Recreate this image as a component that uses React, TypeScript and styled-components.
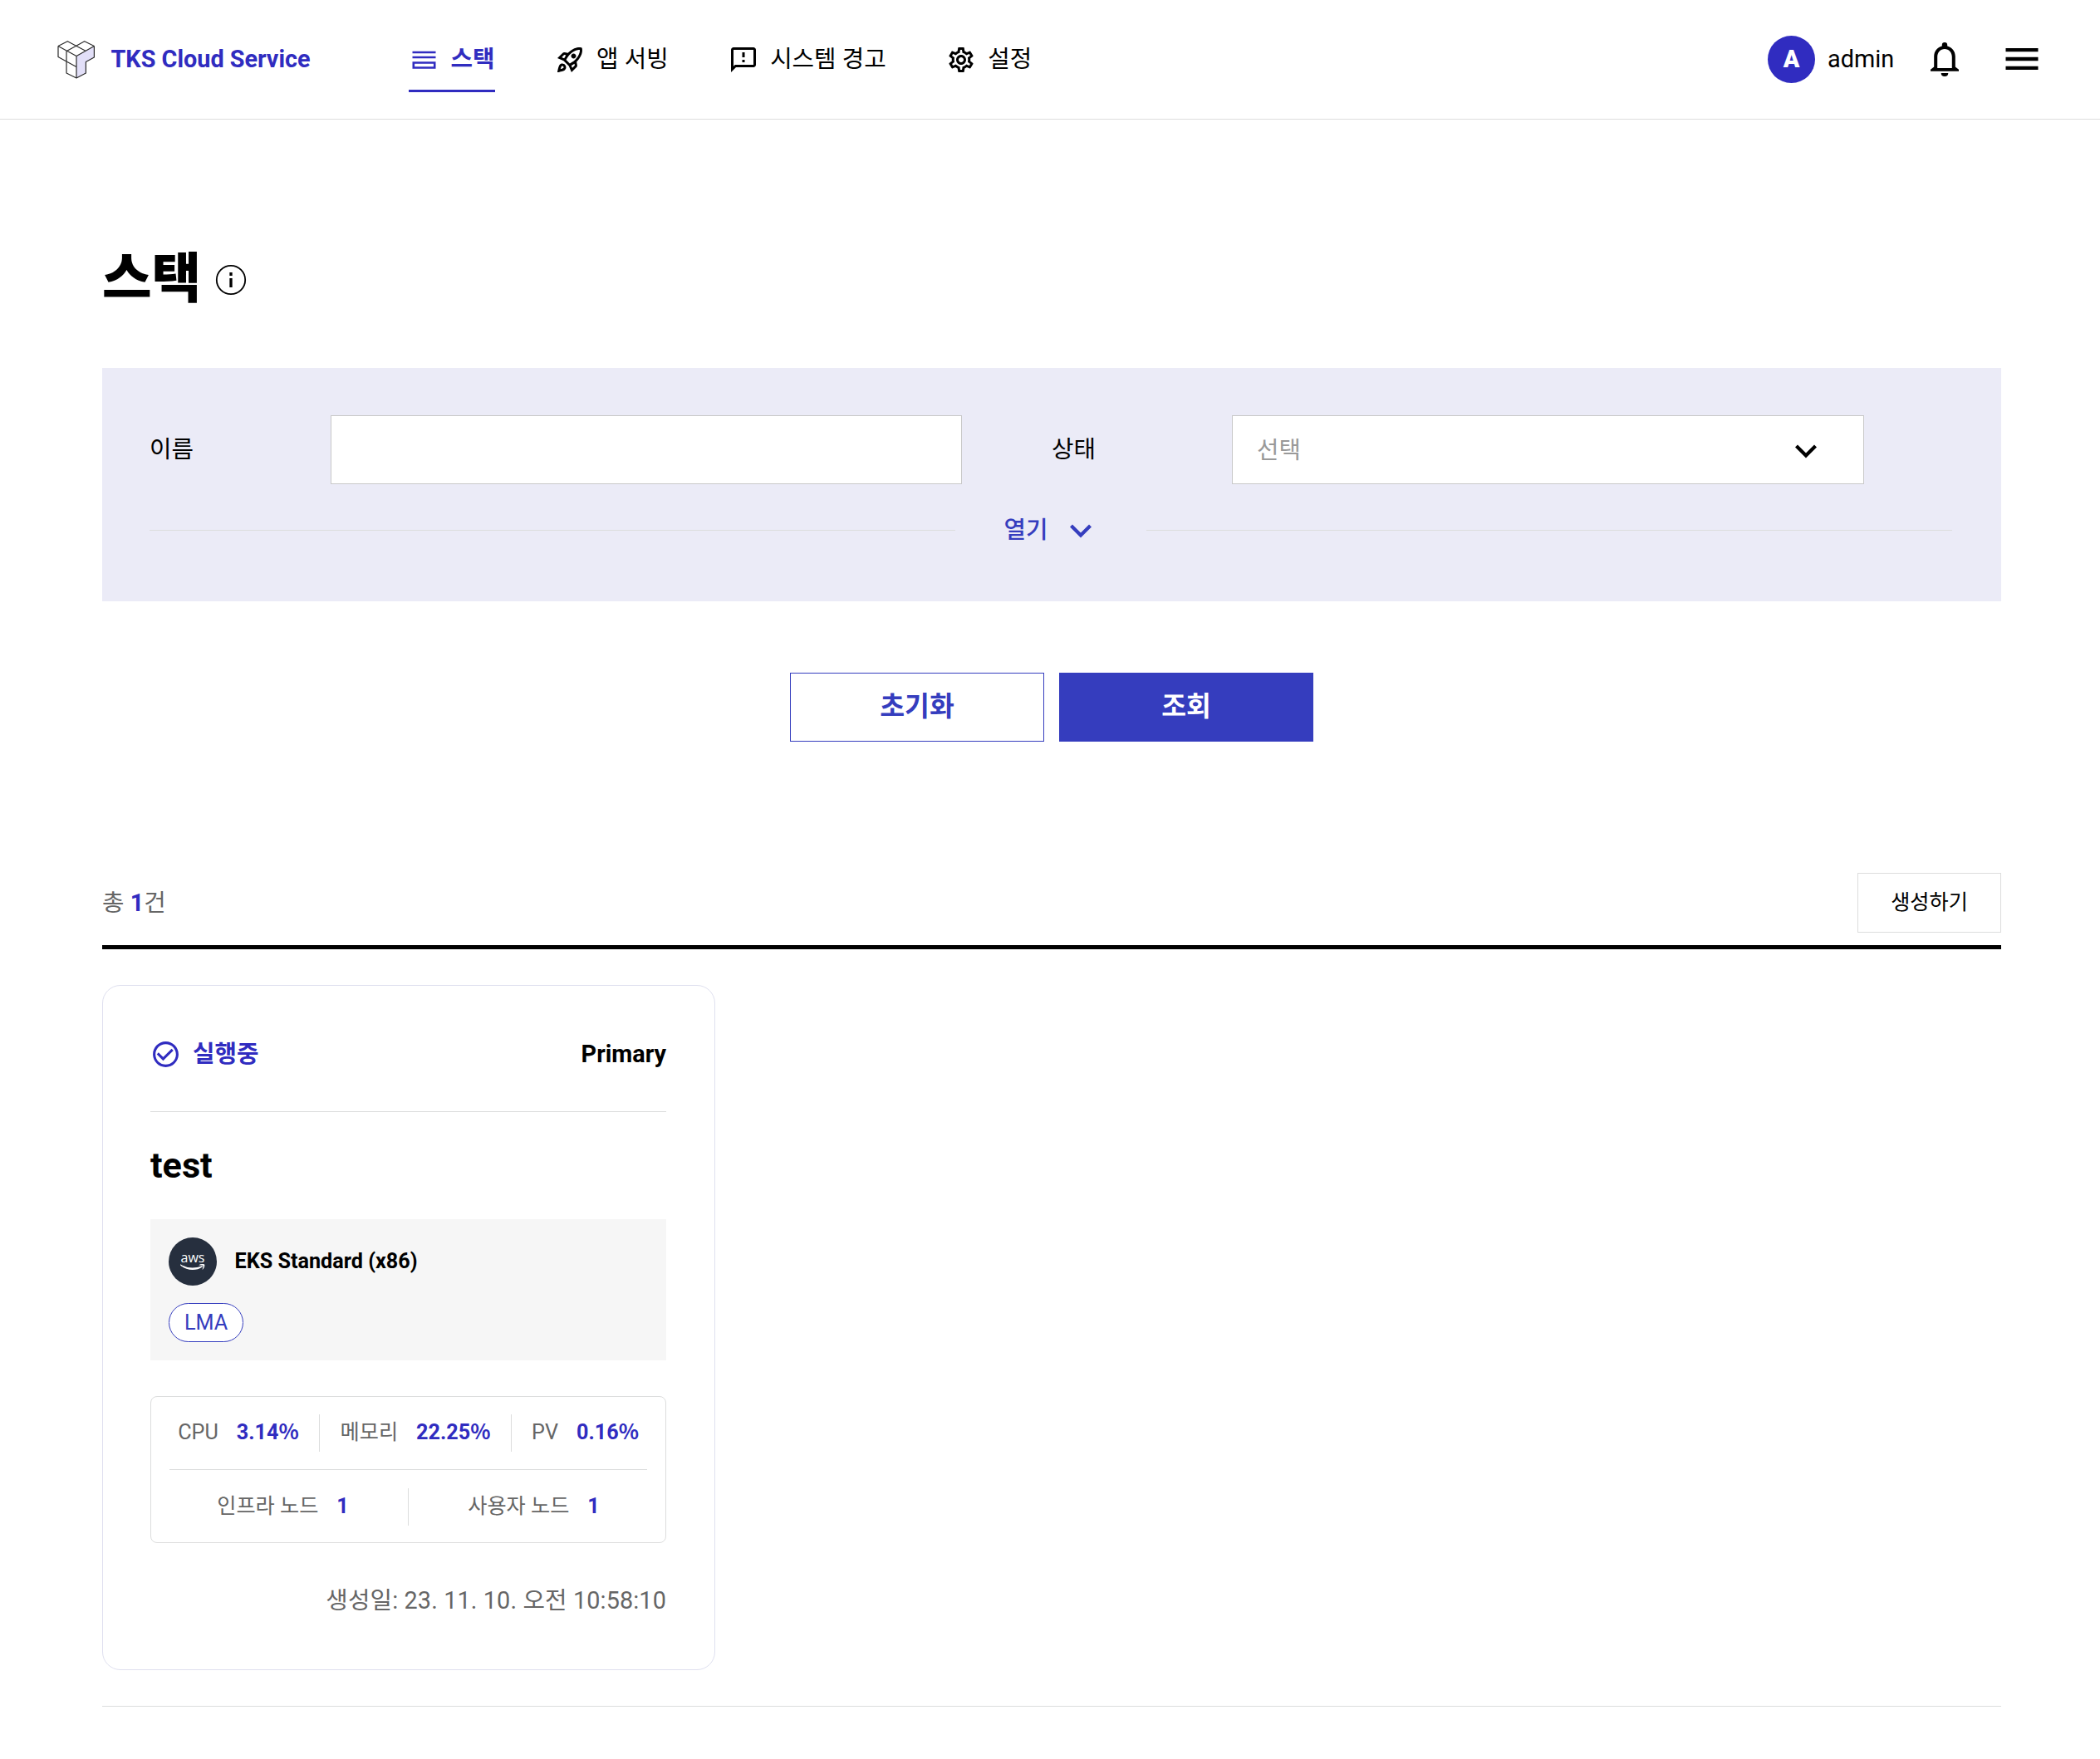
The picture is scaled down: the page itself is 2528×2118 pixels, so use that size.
import React from "react";
import styled, { createGlobalStyle } from "styled-components";
import { MdOutlineRocketLaunch, MdOutlineFeedback, MdOutlineSettings, MdMenu, MdCheckCircleOutline } from "react-icons/md";

const GlobalStyle = createGlobalStyle`
  *, *::before, *::after { box-sizing: border-box; }
  body { margin: 0; background: #fff; color: #000; font-family: Roboto, "Noto Sans CJK KR", sans-serif; font-size: 28.8px; line-height: 1.3; }
  h1, h2, p { margin: 0; }
  button, input { font: inherit; border-radius: 0; padding: 0; cursor: pointer; }
`;

const Header = styled.header`
  display: flex;
  align-items: center;
  height: 144px;
  padding: 0 68px 0 69px;
  border-bottom: 1px solid #dcdddd;
`;
const Brand = styled.div`
  display: flex;
  align-items: center;
  gap: 18.5px;
  width: 423px;
  color: #302cc0;
  font-weight: 700;
`;
const BrandName = styled.span`
  padding-top: 0;
`;
const Nav = styled.nav`
  display: flex;
  gap: 72px;
  flex: 1;
`;
const NavItem = styled.a<{ $active?: boolean }>`
  display: flex;
  align-items: center;
  gap: 14.5px;
  height: 79px;
  padding-top: 4px;
  border-bottom: 3px solid ${(p) => (p.$active ? "#302cc0" : "transparent")};
  color: ${(p) => (p.$active ? "#302cc0" : "#000")};
  font-weight: ${(p) => (p.$active ? 700 : 400)};
  white-space: nowrap;
`;
const UserArea = styled.div`
  display: flex;
  align-items: center;
`;
const Avatar = styled.span`
  display: grid;
  place-items: center;
  width: 57px;
  height: 57px;
  margin-right: 15px;
  border-radius: 50%;
  background: #302cc0;
  color: #fff;
  font-weight: 900;
`;
const UserName = styled.span`
  width: 124px;
`;
const IconButton = styled.button`
  display: flex;
  border: 0;
  background: none;
  color: #000;
  & + & { margin-left: 50px; padding-bottom: 2px; }
`;

const Main = styled.main`
  width: 2286px;
  margin-left: 123px;
`;
const TitleRow = styled.div`
  display: flex;
  align-items: center;
  gap: 17px;
  height: 299px;
  padding-top: 84px;
`;
const Title = styled.h1`
  font-size: 64.8px;
  font-weight: 900;
  line-height: 80px;
`;
const Filter = styled.section`
  height: 281px;
  padding: 57px;
  background: #ebebf7;
`;
const FieldRow = styled.div`
  display: grid;
  grid-template-columns: 218px 760px 108px 217px 761px;
  align-items: center;
  height: 83px;
`;
const Label = styled.label``;
const SecondLabel = styled(Label)`
  grid-column: 4;
`;
const TextInput = styled.input`
  width: 100%;
  height: 83px;
  border: 1px solid #c8c8c8;
  background: #fff;
`;
const Select = styled.div`
  display: flex;
  align-items: center;
  justify-content: space-between;
  height: 83px;
  padding: 2px 55px 0 29px;
  border: 1px solid #c8c8c8;
  background: #fff;
  color: #999;
`;
const FoldRow = styled.div`
  display: flex;
  align-items: center;
  height: 40px;
  margin: 35px 2px 0 0;
`;
const FoldLine = styled.span`
  flex: 1;
  height: 1px;
  background: #dcdddd;
`;
const FoldButton = styled.button`
  display: flex;
  align-items: center;
  justify-content: center;
  gap: 25px;
  width: 230px;
  padding: 2px 7px 0 0;
  border: 0;
  background: none;
  color: #353dbe;
  font-weight: 500;
`;
const Actions = styled.div`
  display: flex;
  justify-content: center;
  gap: 18px;
  margin-top: 86px;
`;
const ActionButton = styled.button<{ $primary?: boolean }>`
  width: 306px;
  height: 83px;
  padding-bottom: 1px;
  border: 1px solid #353dbe;
  background: ${(p) => (p.$primary ? "#353dbe" : "#fff")};
  color: ${(p) => (p.$primary ? "#fff" : "#353dbe")};
  font-size: 32.4px;
  font-weight: 700;
`;
const ListHeader = styled.div`
  display: flex;
  align-items: center;
  justify-content: space-between;
  height: 92px;
  margin-top: 158px;
  padding-bottom: 15px;
  border-bottom: 5px solid #000;
  color: #666;
`;
const Total = styled.span`
  padding-top: 2px;
`;
const Count = styled.strong`
  color: #302cc0;
`;
const CreateButton = styled.button`
  width: 173px;
  height: 72px;
  border: 1px solid #dcdddd;
  background: #fff;
  color: #000;
  font-size: 25.2px;
`;
const CardList = styled.div`
  display: grid;
  grid-template-columns: 738px;
  padding: 43px 0;
  border-bottom: 1px solid #dcdddd;
`;
const Card = styled.article`
  height: 825px;
  padding: 0 58px 0 57px;
  border: 1px solid #dfe0ef;
  border-radius: 22px;
`;
const CardTop = styled.div`
  display: flex;
  align-items: center;
  justify-content: space-between;
  height: 152px;
  padding-top: 15px;
  border-bottom: 1px solid #dcdddd;
  font-weight: 700;
`;
const Status = styled.span`
  display: flex;
  align-items: center;
  gap: 14px;
  color: #302cc0;
`;
const CardName = styled.h2`
  margin: 37px 0 36px;
  font-size: 43.2px;
  line-height: 56px;
  font-weight: 700;
`;
const Template = styled.div`
  height: 170px;
  padding: 22px;
  background: #f6f6f6;
`;
const TemplateName = styled.div`
  display: flex;
  align-items: center;
  gap: 21.5px;
  height: 58px;
  margin-bottom: 21px;
  font-size: 25.2px;
  font-weight: 700;
`;
const AwsBadge = styled.span`
  display: flex;
  flex-direction: column;
  align-items: center;
  width: 58px;
  height: 58px;
  padding-top: 16px;
  border-radius: 50%;
  background: #262f3e;
  color: #fff;
  font: 500 16px/16px "Open Sans", sans-serif;
`;
const Tag = styled.span`
  display: inline-flex;
  align-items: center;
  justify-content: center;
  width: 90px;
  height: 47px;
  padding-top: 1px;
  border: 1px solid #353dbe;
  border-radius: 24px;
  background: #fff;
  color: #353dbe;
  font-size: 25.2px;
`;
const Metrics = styled.div`
  height: 177px;
  margin-top: 43px;
  padding: 0 22px;
  border: 1px solid #dcdddd;
  border-radius: 8px;
  color: #666;
  font-size: 25.2px;
`;
const MetricRow = styled.div<{ $columns: string }>`
  display: grid;
  grid-template-columns: ${(p) => p.$columns};
  align-items: center;
  height: 87px;
  & + & { height: 88px; border-top: 1px solid #dcdddd; padding-top: 1px; }
`;
const Metric = styled.div`
  display: flex;
  align-items: center;
  justify-content: center;
  gap: 22px;
  height: 45px;
  padding: 0 24px;
  white-space: nowrap;
  &:first-child { padding-left: 10px; }
  &:last-child { padding-right: 10px; }
  & + & { border-left: 1px solid #dcdddd; }
`;
const Value = styled.strong`
  color: #302cc0;
`;
const Percent = styled.span`
  font-family: "Noto Sans CJK KR", sans-serif;
  line-height: 1;
`;
const Created = styled.p`
  margin-top: 51px;
  color: #666;
  text-align: right;
  letter-spacing: 0.13px;
`;

const LogoMark = () => (
  <svg width="46" height="46" viewBox="0 0 46 46" fill="none" stroke="#2b2b2b" strokeWidth="1.2" strokeLinejoin="round">
    <path d="M23 18.500 44.400 6.500V20l-10 5.500V39L23 45z" fill="#e2dff8" stroke="none" />
    <path d="M1 6.500 12.300.7 34 12.300M44.400 6.500 32.700.7 11.300 12.500M1 6.500l22 12 21.400-12M1 6.500v13l10 5.500 12 6.500M11 12.500V39l12 6 11.400-6V25.500l10-5.500V6.500M23 18.500V45" />
  </svg>
);
const StackIcon = () => (
  <svg width="36" height="36" viewBox="0 0 36 36" fill="none" stroke="currentColor" strokeWidth="2.6">
    <path d="M4.500 9h28M4.500 15h28M5.800 21.500h25.400v6H5.800z" />
  </svg>
);
const BellIcon = () => (
  <svg width="34" height="41" viewBox="0 0 34 41" fill="#000">
    <path
      fillRule="evenodd"
      d="M17 0a3.200 3.200 0 0 1 3.200 3.200v1.300C26 5.800 29.800 10.800 29.800 17v12.500l4.200 3.200v2H0v-2l4.200-3.200V17c0-6.200 3.800-11.200 9.600-12.500V3.200A3.200 3.200 0 0 1 17 0zm0 8c-5 0-8.800 4-8.800 9.500V31h17.600V17.500C25.800 12 22 8 17 8z"
    />
    <path d="M12.700 37h8.600a4.300 3.900 0 0 1-8.600 0z" />
  </svg>
);
const Chevron = ({ color }: { color: string }) => (
  <svg width="28" height="18" viewBox="0 0 28 18" fill="none" stroke={color} strokeWidth="4.200">
    <path d="m2.500 3 11.500 11.500L25.500 3" />
  </svg>
);
const TitleInfo = styled.svg`
  margin-top: 2px;
`;
const InfoIcon = () => (
  <TitleInfo width="38" height="38" viewBox="0 0 38 38" fill="none" stroke="#000">
    <circle cx="19" cy="19" r="17.200" strokeWidth="1.800" />
    <path d="M19 10v4M19 17v11" strokeWidth="3.300" />
  </TitleInfo>
);
const AwsSmile = () => (
  <svg width="30" height="9" viewBox="0 0 30 9" fill="#fff">
    <path d="M.6.600C8 5.300 18 5.600 25.800 2.300c1-.4 1.700.5.800 1.200C19.500 8.600 7.500 8.400.2 1.400-.2.900.1.300.6.600z" />
    <path d="M22.800.9c1.900-1.200 5.600-1.200 6.300-.4.700.9-.2 4.400-2 6-.3.300-.7.100-.5-.3.500-1.200 1.300-3.600.8-4.200-.5-.7-3-.500-4.300-.4-.5 0-.6-.4-.3-.7z" />
  </svg>
);

const App = () => (
  <>
    <GlobalStyle />
    <Header>
      <Brand><LogoMark /><BrandName>TKS Cloud Service</BrandName></Brand>
      <Nav>
        <NavItem $active><StackIcon />스택</NavItem>
        <NavItem><MdOutlineRocketLaunch size={36} />앱 서빙</NavItem>
        <NavItem><MdOutlineFeedback size={36} />시스템 경고</NavItem>
        <NavItem><MdOutlineSettings size={36} />설정</NavItem>
      </Nav>
      <UserArea>
        <Avatar>A</Avatar>
        <UserName>admin</UserName>
        <IconButton><BellIcon /></IconButton>
        <IconButton><MdMenu size={52} /></IconButton>
      </UserArea>
    </Header>
    <Main>
      <TitleRow><Title>스택</Title><InfoIcon /></TitleRow>
      <Filter>
        <FieldRow>
          <Label>이름</Label>
          <TextInput />
          <SecondLabel>상태</SecondLabel>
          <Select>선택<Chevron color="#000" /></Select>
        </FieldRow>
        <FoldRow><FoldLine /><FoldButton>열기<Chevron color="#353dbe" /></FoldButton><FoldLine /></FoldRow>
      </Filter>
      <Actions>
        <ActionButton>초기화</ActionButton>
        <ActionButton $primary>조회</ActionButton>
      </Actions>
      <ListHeader>
        <Total>총 <Count>1</Count>건</Total>
        <CreateButton>생성하기</CreateButton>
      </ListHeader>
      <CardList>
        <Card>
          <CardTop><Status><MdCheckCircleOutline size={37} />실행중</Status><span>Primary</span></CardTop>
          <CardName>test</CardName>
          <Template>
            <TemplateName><AwsBadge>aws<AwsSmile /></AwsBadge>EKS Standard (x86)</TemplateName>
            <Tag>LMA</Tag>
          </Template>
          <Metrics>
            <MetricRow $columns="180px 231px 1fr">
              <Metric>CPU<Value>3.14<Percent>%</Percent></Value></Metric>
              <Metric>메모리<Value>22.25<Percent>%</Percent></Value></Metric>
              <Metric>PV<Value>0.16<Percent>%</Percent></Value></Metric>
            </MetricRow>
            <MetricRow $columns="287px 1fr">
              <Metric>인프라 노드<Value>1</Value></Metric>
              <Metric>사용자 노드<Value>1</Value></Metric>
            </MetricRow>
          </Metrics>
          <Created>생성일: 23. 11. 10. 오전 10:58:10</Created>
        </Card>
      </CardList>
    </Main>
  </>
);

export default App;
